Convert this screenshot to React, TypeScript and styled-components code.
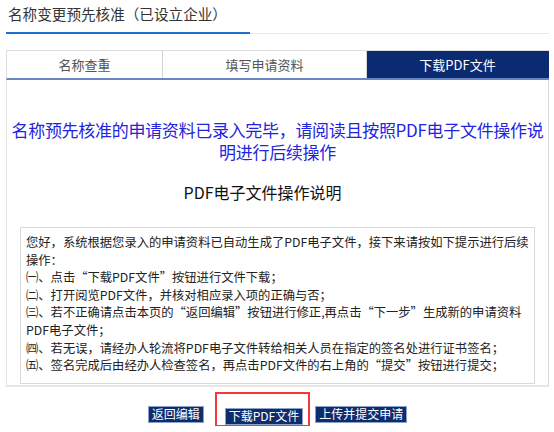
import React from 'react';
import styled, { createGlobalStyle } from 'styled-components';

const GlobalStyle = createGlobalStyle`
	html, body {
		margin: 0;
		padding: 0;
		background: #fff;
	}
	body {
		font-family: "Noto Sans CJK SC", "Noto Sans", sans-serif;
	}
`;

const tabs = ['名称查重', '填写申请资料', '下载PDF文件'];
const tabWidths = [155, 203, 185];

const steps = [
	'您好，系统根据您录入的申请资料已自动生成了PDF电子文件，接下来请按如下提示进行后续操作：',
	'㈠、点击“下载PDF文件”按钮进行文件下载；',
	'㈡、打开阅览PDF文件，并核对相应录入项的正确与否；',
	'㈢、若不正确请点击本页的“返回编辑”按钮进行修正,再点击“下一步”生成新的申请资料PDF电子文件；',
	'㈣、若无误，请经办人轮流将PDF电子文件转给相关人员在指定的签名处进行证书签名；',
	'㈤、签名完成后由经办人检查签名，再点击PDF文件的右上角的“提交”按钮进行提交；',
];

const App: React.FC = () => {
	const active = 2;
	return (
		<>
			<GlobalStyle />
			<Page>
				<Title>名称变更预先核准（已设立企业）</Title>
				<TitleRule />
				<TabBar>
					{tabs.map((t, i) => (
						<Tab key={t} $active={i === active} $width={tabWidths[i]}>
							{t}
						</Tab>
					))}
				</TabBar>
				<Panel>
					<Notice>名称预先核准的申请资料已录入完毕，请阅读且按照PDF电子文件操作说明进行后续操作</Notice>
					<SubTitle>PDF电子文件操作说明</SubTitle>
					<GuideBox>
						{steps.map((s) => (
							<GuideLine key={s}>{s}</GuideLine>
						))}
					</GuideBox>
				</Panel>
				<ButtonRow>
					<ActionButton>返回编辑</ActionButton>
					<Highlight>
						<ActionButton>下载PDF文件</ActionButton>
					</Highlight>
					<ActionButton>上传并提交申请</ActionButton>
				</ButtonRow>
			</Page>
		</>
	);
};

const Page = styled.div`
	width: 543px;
	padding: 0 0 0 6px;
`;

const Title = styled.div`
	font-size: 14.6px;
	line-height: 22px;
	color: #333;
	padding: 3px 0 0 2px;
	height: 27px;
`;

const TitleRule = styled.div`
	position: relative;
	height: 1px;
	background: #dcebfa;
	margin-top: 3px;
	&::before {
		content: '';
		position: absolute;
		left: 0;
		top: -1px;
		width: 244px;
		height: 2px;
		background: #1d6fc9;
	}
`;

const TabBar = styled.div`
	display: flex;
	margin-top: 16px;
	border-top: 1px solid #dcdcdc;
	border-left: 1px solid #dcdcdc;
	border-bottom: 2px solid #6a86c4;
	height: 27px;
`;

const Tab = styled.div<{ $active: boolean; $width: number }>`
	width: ${(p) => p.$width}px;
	flex: none;
	display: flex;
	align-items: center;
	justify-content: center;
	font-size: 13px;
	color: ${(p) => (p.$active ? '#fff' : '#555')};
	background: ${(p) => (p.$active ? '#0a2a72' : '#fff')};
	border-right: 1px solid ${(p) => (p.$active ? '#0a2a72' : '#d4d4d4')};
	&:last-child {
		flex: 1;
	}
`;

const Panel = styled.div`
	border-left: 1px solid #e2e2e2;
	border-right: 1px solid #d8d8d8;
	border-bottom: 2px solid #e6e6e6;
	padding: 39px 0 0;
	height: 266px;
`;

const Notice = styled.div`
	font-size: 17px;
	line-height: 22px;
	color: #2424e0;
	text-align: center;
	padding: 0 1px;
	letter-spacing: -0.3px;
`;

const SubTitle = styled.div`
	font-size: 16px;
	line-height: 22px;
	color: #111;
	text-align: center;
	margin-top: 18px;
	padding-right: 30px;
`;

const GuideBox = styled.div`
	margin: 24px 13px 0 13px;
	border: 1px solid #d9d9d9;
	padding: 6px 4px 8px 5px;
`;

const GuideLine = styled.div`
	font-size: 12.3px;
	line-height: 17.6px;
	color: #222;
`;

const ButtonRow = styled.div`
	display: flex;
	justify-content: center;
	align-items: center;
	gap: 12px;
	padding: 15px 0 0 0;
`;

const Highlight = styled.div`
	position: relative;
	margin-left: 9px;
	&::after {
		content: '';
		position: absolute;
		left: -10px;
		right: -7px;
		top: -10px;
		bottom: -1px;
		border: 2px solid #f03a3a;
	}
`;

const ActionButton = styled.button`
	font-family: inherit;
	font-size: 12px;
	line-height: 14px;
	height: 17px;
	padding: 0 3px;
	color: #fff;
	background: #0d2d6e;
	border: 1px solid #8ea2c8;
	border-radius: 0;
	cursor: pointer;
`;

export default App;
